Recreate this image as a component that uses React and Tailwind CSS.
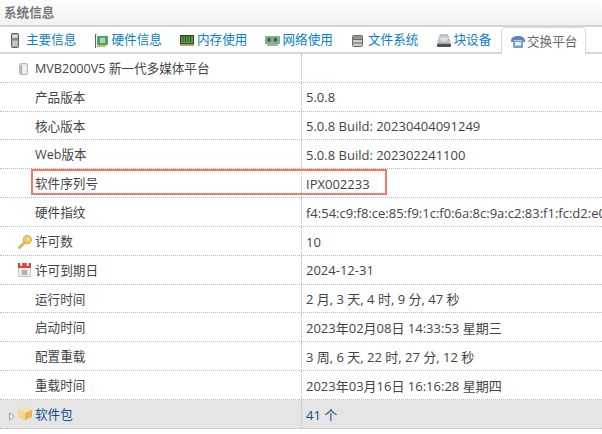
const font = { fontFamily: '"Open Sans", "Noto Sans CJK SC", sans-serif' };

const Ic = ({ w, h, vw, vh, children }) => (
  <svg width={w} height={h} viewBox={`0 0 ${vw} ${vh}`} preserveAspectRatio="none" className="block">{children}</svg>
);

const Server = () => (
  <Ic w={8} h={15} vw={8} vh={15}><rect x=".5" y=".5" width="7" height="14" rx="1" fill="#a9a9a4" stroke="#5c5c58" /><rect x="1.500" y="2" width="5" height="2.500" fill="#e6e6e2" /><rect x="1.500" y="5.500" width="5" height="1" fill="#6d6d69" /><rect x="1.500" y="8" width="5" height="5" fill="#c6c6c1" /></Ic>
);
const Card = () => (
  <Ic w={13} h={14} vw={13} vh={14}><path d="M.5 0h1.500M.5 0v14" fill="none" stroke="#666" /><rect x="2" y="2" width="11" height="9" fill="#4da56c" /><rect x="5" y="4" width="5" height="5" fill="#a7d8b0" /><rect x="2" y="11" width="9" height="2" fill="#cdbb66" /></Ic>
);
const Memory = () => (
  <Ic w={14} h={11} vw={14} vh={11}><rect width="14" height="11" fill="#2c4a27" /><rect x="1" y="1.500" width="12" height="6.500" fill="#63a04c" /><path d="M3 2v5M5.500 2v5M8 2v5M10.500 2v5" stroke="#244a1d" /><rect y="9" width="14" height="2" fill="#a7a46c" /></Ic>
);
const NetCard = () => (
  <Ic w={15} h={10} vw={15} vh={10}><rect width="15" height="8" rx="1" fill="#7fae93" /><rect x="2.500" y="2" width="3" height="3.500" fill="#3f5f4d" /><rect x="9" y="2" width="3" height="3.500" fill="#3f5f4d" /><rect x="2" y="8" width="11" height="2" fill="#a5b39b" /></Ic>
);
const Db = () => (
  <Ic w={11} h={12} vw={11} vh={12}><rect x=".5" y=".5" width="10" height="11" rx="1" fill="#cdcdc8" stroke="#6a6a64" /><rect x="1" y="1" width="9" height="3" fill="#98988f" /><path d="M1 4.500h9M1 8h9" stroke="#6a6a64" /></Ic>
);
const Drive = () => (
  <Ic w={14} h={13} vw={14} vh={13}><path d="M3 0h8l3 9H0z" fill="#bac1c9" /><ellipse cx="7" cy="5" rx="4" ry="2.500" fill="#d9dde1" /><rect y="9.500" width="14" height="3.500" rx="1" fill="#4b5156" /></Ic>
);
const Phone = () => (
  <Ic w={14} h={12} vw={14} vh={12}><path d="M0 4c1-3 3-4 7-4s6 1 7 4v2h-3V4H3v2H0z" fill="#5a86b8" /><rect x="2" y="4.500" width="10" height="7.500" rx="1" fill="#7ba1cb" /><rect x="4" y="6" width="6" height="3.500" fill="#e8eff7" /></Ic>
);
const Chip = () => (
  <Ic w={9} h={12} vw={9} vh={12}><rect x=".5" y=".5" width="8" height="11" rx="1" fill="#dcdfdc" stroke="#b4b7b4" /><rect x="3.500" y="2" width="4" height="8" fill="#f1f3f1" /><rect x="1.500" y="2" width="1.500" height="8.500" fill="#a3aba5" /></Ic>
);
const Key = () => (
  <Ic w={14} h={14} vw={15} vh={15}><circle cx="10" cy="5" r="4.500" fill="#eecb6b" stroke="#d3a746" /><path d="M7 8 1.800 13.200" stroke="#e0b44e" strokeWidth="3.200" strokeLinecap="round" /><circle cx="11" cy="4" r="1.200" fill="#fff3c9" /></Ic>
);
const Calendar = () => (
  <Ic w={13} h={14} vw={14} vh={14}><rect x=".5" y=".5" width="13" height="13" fill="#f0eee8" stroke="#c4c4c0" /><rect width="14" height="5" fill="#d9473f" /><rect x="2.500" width="2" height="3" fill="#fff" /><rect x="9.500" width="2" height="3" fill="#fff" /><rect x="4" y="7" width="6" height="5" fill="#b3b3ad" /></Ic>
);
const Box = () => (
  <Ic w={14} h={13} vw={15} vh={15}><path d="M7.500 0 15 3.500v8L7.500 15 0 11.500v-8z" fill="#e6b659" /><path d="M7.500 0 15 3.500 7.500 7 0 3.500z" fill="#f7e2a8" /><path d="M7.500 7v8L0 11.500v-8z" fill="#f3d78e" /></Ic>
);
const Tri = () => (
  <svg width="6" height="9" viewBox="0 0 6 9" className="block"><path d="M.5.8v7.400L5.200 4.500z" fill="#eee" stroke="#a8a8a8" /></svg>
);

const tabs = [
  { label: "主要信息", icon: <Server />, w: "w-[85.5px]", ip: "pl-[3px]" },
  { label: "硬件信息", icon: <Card />, w: "w-[85.5px]", ip: "pl-[1.5px]" },
  { label: "内存使用", icon: <Memory />, w: "w-[85.5px]", ip: "pl-[1px]" },
  { label: "网络使用", icon: <NetCard />, w: "w-[85.5px]", ip: "pl-[0.5px]" },
  { label: "文件系统", icon: <Db />, w: "w-[85.5px]", ip: "pl-[2px]" },
  { label: "块设备", icon: <Drive />, w: "w-[69.5px]", ip: "pl-[1.5px]" },
];

const rows = [
  { k: "MVB2000V5 新一代多媒体平台", v: "", icon: <Chip />, pos: "left-[19px] top-[9px]" },
  { k: "产品版本", v: "5.0.8" },
  { k: "核心版本", v: "5.0.8 Build: 20230404091249" },
  { k: "Web版本", v: "5.0.8 Build: 202302241100" },
  { k: "软件序列号", v: "IPX002233" },
  { k: "硬件指纹", v: "f4:54:c9:f8:ce:85:f9:1c:f0:6a:8c:9a:c2:83:f1:fc:d2:e0:" },
  { k: "许可数", v: "10", icon: <Key />, pos: "left-[18px] top-[8px]" },
  { k: "许可到期日", v: "2024-12-31", icon: <Calendar />, pos: "left-[18px] top-[7px]" },
  { k: "运行时间", v: "2 月, 3 天, 4 时, 9 分, 47 秒" },
  { k: "启动时间", v: "2023年02月08日 14:33:53 星期三" },
  { k: "配置重载", v: "3 周, 6 天, 22 时, 27 分, 12 秒" },
  { k: "重载时间", v: "2023年03月16日 16:16:28 星期四" },
];

export default function App() {
  return (
    <div className="relative w-[602px] h-[434px] overflow-hidden bg-white text-[13px] text-[#444]" style={font}>
      <div className="h-[27px] flex items-center pl-1 pt-[2px] bg-gradient-to-b from-white to-[#f1f1f1] border-b-2 border-[#d4d4d4] font-semibold text-[12.6px] text-[#777]">系统信息</div>
      <div className="h-[27px] flex pl-[2px] border-b-2 border-[#d8d8d8] text-[12.6px]">
        {tabs.map((t) => (
          <div key={t.label} className={`${t.w} pl-[6px] pt-[2px] flex items-center text-[#0a80c8] whitespace-nowrap`}>
            <span className={`w-[18px] shrink-0 ${t.ip}`}>{t.icon}</span>
            <span>{t.label}</span>
          </div>
        ))}
        <div className="ml-[2px] w-[85px] h-[27px] flex items-center pl-[7px] pt-[2px] text-[#666] border border-b-0 border-[#d8d8d8] rounded-t-[5px] bg-white whitespace-nowrap relative z-10">
          <span className="w-[18px] shrink-0 pl-[2px]"><Phone /></span>
          <span>交换平台</span>
        </div>
      </div>
      <div className="flex flex-col">
        {rows.map((r) => (
          <div key={r.k} className="h-[28.83px] flex border-b border-dotted border-[#bbb]">
            <div className="w-[302px] shrink-0 flex items-center relative pl-[35px] pt-[3px] border-r border-dotted border-[#bbb] whitespace-nowrap text-[12.6px]">
              {r.icon && <span className={`absolute ${r.pos}`}>{r.icon}</span>}
              {r.k}
            </div>
            <div className="flex items-center pl-[4px] pt-[3px] whitespace-nowrap">{r.v}</div>
          </div>
        ))}
        <div className="h-[28.83px] flex border-b border-dotted border-[#bbb] bg-[#e5e5e5] text-[#0e4f8c]">
          <div className="w-[302px] shrink-0 flex items-center relative pl-[35px] pt-[3px] border-r border-dotted border-[#bbb] text-[12.6px]">
            <span className="absolute left-[9px] top-[12px]"><Tri /></span>
            <span className="absolute left-[18px] top-[7px]"><Box /></span>
            软件包
          </div>
          <div className="flex items-center pl-[4px] pt-[3px]">41 个</div>
        </div>
      </div>
      <div className="absolute left-[31px] top-[169px] w-[356px] h-[26px] border-2 border-[#f4776a]" />
    </div>
  );
}
